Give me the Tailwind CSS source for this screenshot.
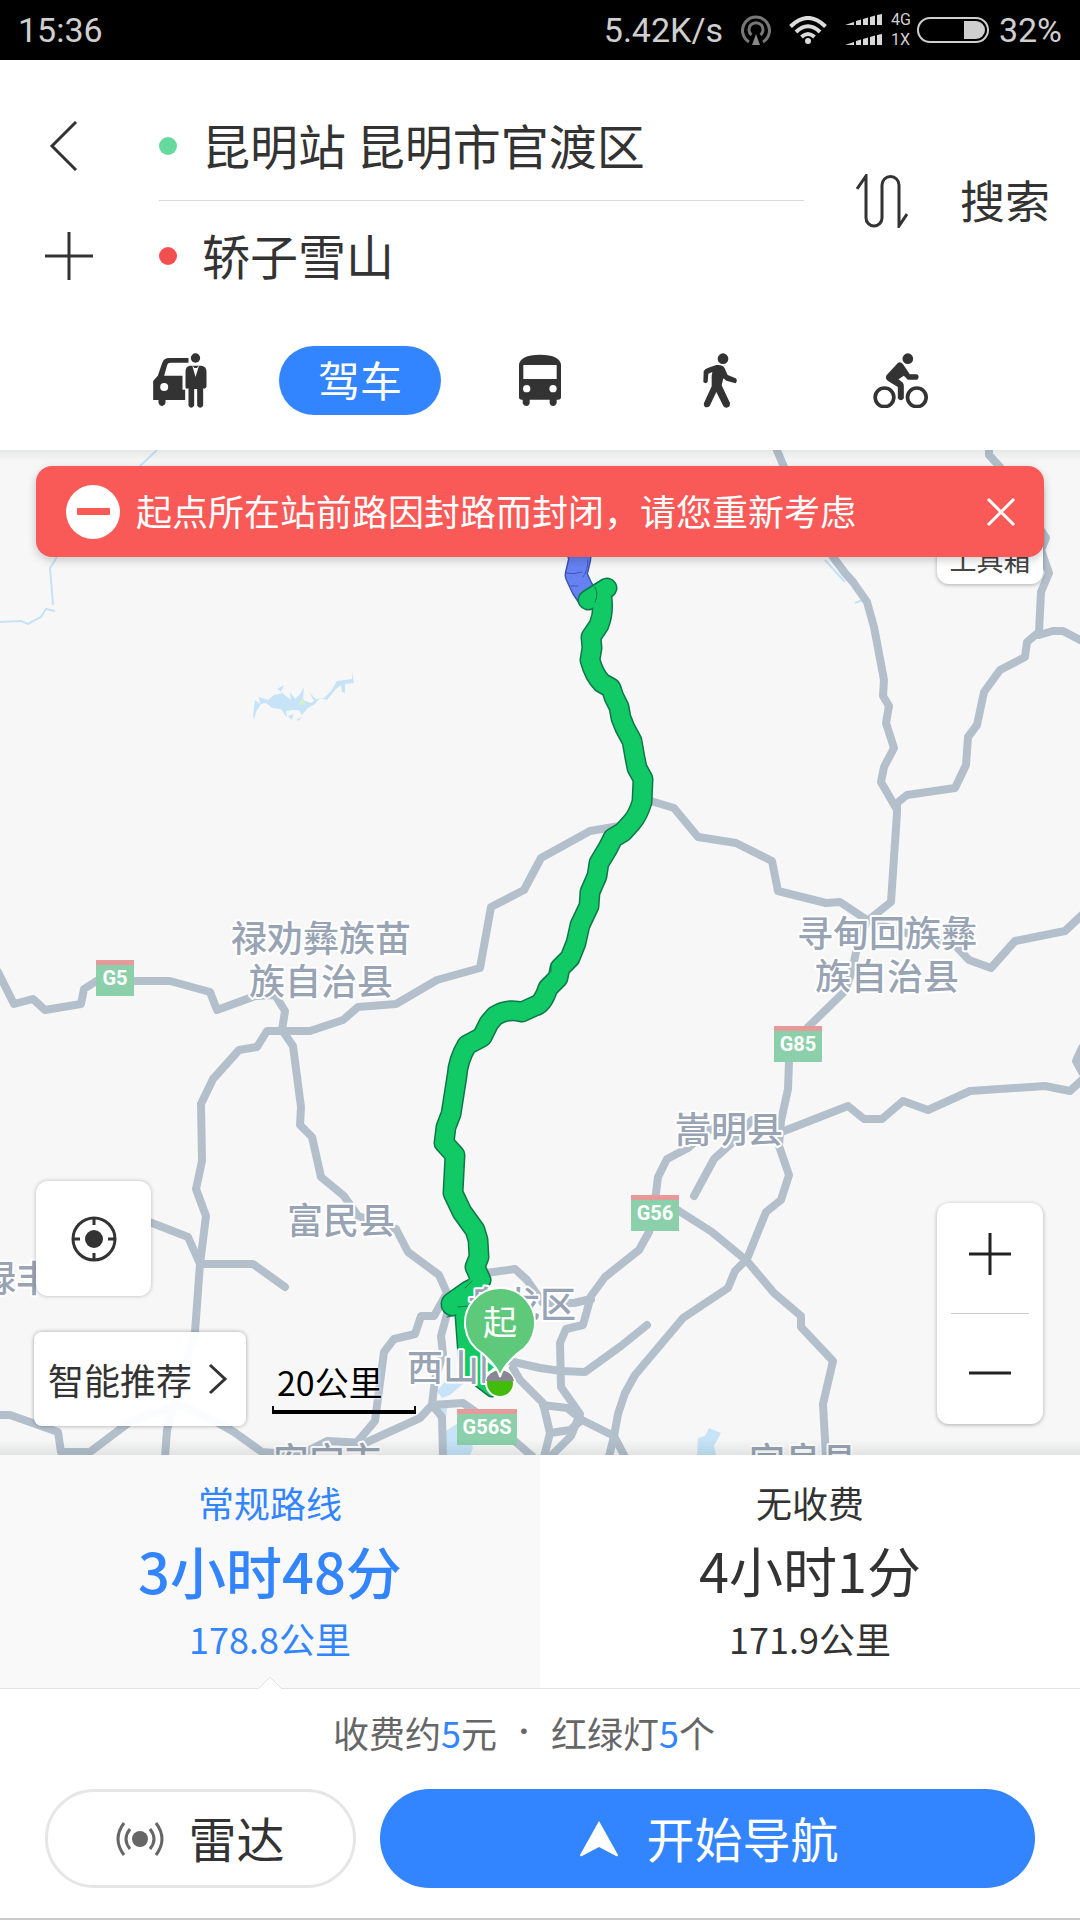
<!DOCTYPE html>
<html lang="zh-CN">
<head>
    <meta charset="UTF-8">
    <meta name="viewport" content="width=device-width, initial-scale=1.0">
    <title>路线规划</title>
    <script src="https://cdn.jsdelivr.net/npm/@tailwindcss/browser@4"></script>
</head>
<body class="min-h-screen flex flex-col bg-white text-[#333] font-['Noto_Sans_CJK_SC',sans-serif]">

    <!-- Status bar -->
    <div class="h-[60px] shrink-0 bg-black text-[#cfcfcf] flex items-center px-[18px] text-[34px] leading-none font-[Roboto,sans-serif]">
        <span class="mr-auto">15:36</span>
        <span>5.42K/s</span>
        <svg class="ml-[18px] w-[30px] h-[30px]" viewBox="0 0 30 30" fill="none" stroke="#777" stroke-width="3">
            <path d="M8 27A13.500 13.500 0 1 1 22 27"/>
            <path d="M10.500 20A7 7 0 1 1 19.500 20"/>
            <path d="M15 19L19 30H11Z" fill="#888" stroke="none"/>
        </svg>
        <svg class="ml-[18px] w-[38px] h-[28px]" viewBox="0 0 38 28" fill="none" stroke="#dcdcdc" stroke-width="4">
            <path d="M1.500 10.500Q19-6.500 36.500 10.500"/>
            <path d="M7 16Q19 4.500 31 16"/>
            <path d="M12.500 21Q19 15 25.500 21"/>
            <circle cx="19" cy="25" r="3" fill="#dcdcdc" stroke="none"/>
        </svg>
        <svg class="ml-[18px] w-[38px] h-[32px]" viewBox="0 0 38 32" fill="#d8d8d8">
            <path d="M0 11L9 8V11ZM11 7L16 5.500V11H11ZM18 5L23 3.500V11H18ZM25 3L30 1.500V11H25ZM32 1L37 0V11H32Z"/>
            <path d="M0 31L9 28V31ZM11 27L16 25.500V31H11ZM18 25L23 23.500V31H18ZM25 23L30 21.500V31H25ZM32 21L37 20V31H32Z"/>
        </svg>
        <span class="ml-2 flex flex-col text-base leading-5"><span>4G</span><span>1X</span></span>
        <span class="ml-[6px] w-[72px] h-[26px] rounded-full border-2 border-[#cfcfcf] p-[2px] flex justify-end">
            <span class="w-[21px] h-full bg-[#cfcfcf] rounded-r-full"></span>
        </span>
        <span class="ml-[10px]">32%</span>
    </div>

    <!-- Start / destination -->
    <header class="shrink-0 bg-white pt-[31px]">
        <div class="flex items-center">
            <div class="w-[159px] shrink-0 pl-[44px]">
                <button class="flex items-center w-[50px] h-[110px]" aria-label="返回">
                    <svg class="w-[50px] h-[50px]" viewBox="0 0 50 50" fill="none" stroke="#333" stroke-width="3"><path d="M32 1L8 25L32 49"/></svg>
                </button>
                <button class="flex items-center w-[50px] h-[110px]" aria-label="添加途经点">
                    <svg class="w-[50px] h-[50px]" viewBox="0 0 50 50" stroke="#333" stroke-width="3"><path d="M25 1V49M1 25H49"/></svg>
                </button>
            </div>
            <div class="flex-1 min-w-0">
                <label class="flex items-center h-[110px] border-b border-[#d9d9d9]">
                    <span class="w-[18px] h-[18px] rounded-full bg-[#66d99c] shrink-0"></span>
                    <input type="text" aria-label="起点" value="昆明站 昆明市官渡区" class="ml-[25px] pb-1 min-w-0 flex-1 text-5xl outline-none">
                </label>
                <label class="flex items-center h-[110px]">
                    <span class="w-[18px] h-[18px] rounded-full bg-[#f25050] shrink-0"></span>
                    <input type="text" aria-label="终点" value="轿子雪山" class="ml-[25px] pb-1 min-w-0 flex-1 text-5xl outline-none">
                </label>
            </div>
            <button class="ml-[52px]" aria-label="交换起终点">
                <svg class="w-[52px] h-[54px]" viewBox="0 0 52 54" fill="none" stroke="#333" stroke-width="3">
                    <path d="M1 15L10 2V44A8 8 0 0 0 26 44V11A8 8 0 0 1 43 11V52L51 40"/>
                </svg>
            </button>
            <button class="ml-[52px] mr-[30px] pb-1 text-[45px] leading-none">搜索</button>
        </div>

        <!-- Travel modes -->
        <nav class="grid grid-cols-5 items-center px-[90px] h-[139px]">
            <button class="flex justify-center" aria-label="打车">
                <svg class="w-[54px] h-[55px]" viewBox="38 40 161 165" fill="#333">
                    <path d="M38 181V124L52 108L65 70Q70 55 86 55H144V69H90Q82 69 80 76L71 108H126V150H134V181Z"/>
                    <path d="M54 180H75V190Q72 199 65 199Q57 199 54 190Z"/>
                    <circle cx="71" cy="142" r="12" fill="#fff"/>
                    <circle cx="165" cy="55" r="14"/>
                    <path d="M148 78H183Q198 80 198 96V142Q193 149 188 146V198Q179 210 170 198V148H161V198Q152 210 144 198V146Q135 149 135 142V96Q135 80 148 78Z"/>
                    <path d="M155 77L165 112L176 77L169 85H162Z" fill="#fff"/>
                </svg>
            </button>
            <button class="justify-self-center w-[162px] h-[69px] pb-1 rounded-full bg-[#3385ff] text-white text-[42px] leading-none">驾车</button>
            <button class="flex justify-center" aria-label="公交">
                <svg class="w-[44px] h-[55px]" viewBox="1135 40 130 165" fill="#333">
                    <path d="M1137 76Q1139 46 1200 45Q1261 46 1263 76V172Q1263 180 1254 180H1250V190Q1247 199 1239 199Q1231 199 1229 190V180H1169V190Q1167 199 1159 199Q1151 199 1148 190V180H1145Q1137 180 1137 172Z"/>
                    <path d="M1150 76H1250V118H1150Z" fill="#fff"/>
                    <circle cx="1160" cy="147" r="11" fill="#fff"/>
                    <circle cx="1239" cy="147" r="11" fill="#fff"/>
                </svg>
            </button>
            <button class="flex justify-center" aria-label="步行">
                <svg class="w-[36px] h-[55px]" viewBox="130 40 106 165" fill="#333">
                    <circle cx="192" cy="57" r="16"/>
                    <path d="M172 76Q190 74 196 84L206 106L230 116Q237 122 230 131L202 123L193 116L188 137L213 190Q214 204 202 204Q196 204 193 199L172 157L152 199Q146 205 138 202Q132 197 135 190L158 140V108L160 97L148 102L146 127Q140 134 133 127L134 95Q138 88 146 85Z"/>
                </svg>
            </button>
            <button class="flex justify-center" aria-label="骑行">
                <svg class="w-[55px] h-[55px]" viewBox="638 40 164 165" fill="#333">
                    <circle cx="742" cy="57" r="16"/>
                    <circle cx="672" cy="173" r="28" fill="none" stroke="#333" stroke-width="11"/>
                    <circle cx="769" cy="173" r="28" fill="none" stroke="#333" stroke-width="11"/>
                    <path d="M712 70Q720 65 727 73L748 104H770Q779 112 770 120H742L730 108L714 119L727 129Q730 132 730 140V176Q721 188 712 176V142L684 125Q672 118 678 107Z"/>
                </svg>
            </button>
        </nav>
    </header>

    <!-- Map -->
    <main class="relative flex-1 min-h-[700px] overflow-hidden bg-[#f7f7f7]">
        <svg class="absolute inset-0 w-full h-full" viewBox="0 450 1080 1005" preserveAspectRatio="xMidYMid slice" role="img" aria-label="昆明站到轿子雪山路线图">
            <!-- water -->
            <g fill="none" stroke="#c6e2f5" stroke-width="2">
                <path d="M157 450L139 467M57 557L50 568L53 605M55 611L46 609L41 617L28 624L21 621L0 622"/>
                <path d="M825 560L845 582M855 603L868 598L860 588"/>
            </g>
            <g fill="#c6e3f8">
                <path d="M253 715L255 700L260 704L259 697L268 700L274 695L283 693L277 689L284 685L281 692L291 700L290 692L295 699L300 694L304 687L303 700L311 703L314 701L309 692L316 699L324 698L331 691L337 681L352 679V672L354 683L345 684V693L342 692L341 685L336 689L327 700L320 698L315 704L308 708L302 715L299 710L292 710L286 711L287 718L281 709L272 708L266 703L261 704L256 712L254 720ZM288 716L293 714L292 720ZM297 719L303 717L298 721Z"/>
                <path d="M697 1455L698 1438L705 1436L709 1428L721 1433L714 1446L716 1455Z"/>
                <path d="M437 1391L446 1380L465 1382L450 1395L442 1398ZM446 1418L448 1402L439 1400L441 1412ZM446 1431L463 1420L473 1448L470 1455H446Z"/>
            </g>
            <path d="M299 702L303 698L306 705H300Z" fill="#d2efd0"/>
            <!-- roads -->
            <g fill="none" stroke="#b3c0cc" stroke-width="8" stroke-linejoin="round" stroke-linecap="round">
                <path d="M776 448L784 467L833 557L845 573L853 582L867 602L874 627L884 680L883 696L889 706L886 723L894 748L884 767L881 782L896 808"/>
                <path d="M989 448V455L1000 467L1046 538L1041 550L1049 573L1041 592L1039 632L1027 642L1025 657L1000 670L984 692L977 725L968 737L966 765L955 788L907 795L897 803V813L891 902L871 918"/>
                <path d="M1039 635L1053 631H1063L1082 641"/>
                <path d="M640 797L654 802L674 808L698 837L736 843L772 861L778 891L826 903L840 902L867 920L902 932L953 943L969 960L991 968L1015 941L1065 931L1082 915"/>
                <path d="M625 825L590 831L541 858L524 890L491 907L480 968L437 980L396 1004L358 1007L343 1020L310 1031H267L257 1047L239 1050L213 1079L201 1104L202 1161L196 1189L206 1216L200 1264L195 1332L167 1430L165 1457"/>
                <path d="M-2 972L14 1004L33 999L45 1010L81 1004L84 989L98 980L134 981H170L210 992L217 1010L255 996L275 995L285 1011L282 1030L293 1046L301 1107L300 1125L312 1137L321 1177L344 1196L358 1216L396 1229L408 1252L439 1275L447 1293L434 1316H421L415 1334L394 1339L384 1352L375 1421L358 1441"/>
                <path d="M447 1293V1314L441 1336L443 1354L435 1379L432 1405L442 1417L443 1457"/>
                <path d="M140 1219L152 1223L188 1237L200 1264H253L285 1287"/>
                <path d="M-2 1415H10L58 1432L61 1452H90L131 1421L180 1405L213 1420L234 1432L262 1452L300 1455L327 1441L365 1443L420 1418L432 1405L463 1403L473 1410L500 1430L517 1443L533 1457"/>
                <path d="M486 1273L515 1269L527 1280L543 1303H574L591 1299"/>
                <path d="M505 1360L540 1368L561 1371L585 1372L621 1346L647 1325"/>
                <path d="M513 1368L520 1380L543 1403L550 1433L544 1457M543 1405L567 1408L582 1420L614 1436L609 1457M550 1433L570 1430L582 1420M614 1436L625 1457"/>
                <path d="M735 1122L709 1130L688 1148L667 1159L658 1177L656 1193L649 1232L639 1250L605 1277L591 1296L583 1325L566 1329L560 1343L561 1387L580 1414L571 1436L550 1457"/>
                <path d="M614 1436L618 1414L625 1393L635 1375L683 1318L728 1288L735 1271L747 1259L766 1212L781 1200L789 1175L779 1146L781 1121L788 1089L789 1061L800 1035L845 991L852 971L858 943L867 920"/>
                <path d="M779 1133L848 1106L864 1119H882L903 1101L928 1110L970 1091L1045 1086L1070 1091L1082 1080M1082 1048L1076 1061L1082 1072"/>
                <path d="M656 1198L679 1211L712 1232L747 1261L774 1293L801 1316V1327L833 1361L823 1404L826 1457"/>
                <path d="M694 1196L714 1159L735 1140L752 1120L779 1133"/>
            </g>

            <!-- route -->
            <g fill="none" stroke-linejoin="round" stroke-linecap="round">
                <path d="M575 545L580 558L576 575L582 588L588 597" stroke="#3d56b5" stroke-width="23"/>
                <path d="M575 545L580 558L576 575L582 588L588 597" stroke="#6682f2" stroke-width="20"/>
                <path d="M566 573Q574 575 582 572M571 586L578 586M588 560Q588 570 583 577" stroke="#3d56b5"/>
                <path d="M588 600L607 588M602 598Q604 612 599 625L591 637L592 648L590 660Q594 675 602 683L611 688L614 697L619 707L621 718L625 728L632 741L635 758L637 768L643 779L642 802Q638 815 632 822L623 832L613 838L608 848L599 863L597 876L590 892L589 906L580 925L576 943L570 958L560 968L558 978L548 988Q543 1004 535 1006L522 1012Q507 1008 495 1016L489 1023L482 1037L467 1045Q458 1060 457 1076L451 1114L446 1127L444 1143L455 1155L453 1193L462 1212L475 1230L478 1240L479 1257L475 1267L481 1280L470 1292" stroke="#10774a" stroke-width="21"/>
                <path d="M462 1316L466 1370L492 1390L497 1375L476 1310Z" fill="#10774a" stroke="#10774a" stroke-width="15"/>
                <path d="M470 1292L453 1304" stroke="#10774a" stroke-width="25"/>
                <path d="M470 1292L453 1304" stroke="#11c965" stroke-width="22"/>
                <path d="M588 600L607 588M602 598Q604 612 599 625L591 637L592 648L590 660Q594 675 602 683L611 688L614 697L619 707L621 718L625 728L632 741L635 758L637 768L643 779L642 802Q638 815 632 822L623 832L613 838L608 848L599 863L597 876L590 892L589 906L580 925L576 943L570 958L560 968L558 978L548 988Q543 1004 535 1006L522 1012Q507 1008 495 1016L489 1023L482 1037L467 1045Q458 1060 457 1076L451 1114L446 1127L444 1143L455 1155L453 1193L462 1212L475 1230L478 1240L479 1257L475 1267L481 1280L470 1292" stroke="#11c965" stroke-width="18"/>
                <path d="M462 1316L466 1370L492 1390L497 1375L476 1310Z" fill="#11c965" stroke="#11c965" stroke-width="12"/>
                <path d="M595 587Q599 594 595 602M458 1307L468 1306M551 972V965M465 1288L472 1281M447 1317L456 1315" stroke="#10774a"/>
            </g>

            <!-- place names -->
            <g class="font-['Noto_Sans_CJK_SC',sans-serif] font-medium" font-size="36" fill="#98a3b3" stroke="#fff" stroke-width="4" paint-order="stroke" stroke-linejoin="round" text-anchor="middle">
                <text x="321" y="952">禄劝彝族苗</text>
                <text x="321" y="995">族自治县</text>
                <text x="887" y="947">寻甸回族彝</text>
                <text x="887" y="990">族自治县</text>
                <text x="729" y="1143">嵩明县</text>
                <text x="341" y="1234">富民县</text>
                <text x="16" y="1292">禄丰</text>
                <text x="522" y="1318">盘龙区</text>
                <text x="461" y="1381">西山区</text>
                <text x="327" y="1474">安宁市</text>
                <text x="803" y="1474">宜良县</text>
            </g>

            <!-- highway shields -->
            <g class="font-[Roboto,sans-serif] font-bold" font-size="20" text-anchor="middle">
                <path d="M96 960H134V996H96ZM774 1026H822V1062H774ZM631 1195H679V1231H631ZM457 1409H517V1445H457Z" fill="#8bd0aa"/>
                <path d="M96 960H134V965H96ZM774 1026H822V1031H774ZM631 1195H679V1200H631ZM457 1409H517V1414H457Z" fill="#e69a9a"/>
                <g fill="#fff">
                    <text x="115" y="985">G5</text>
                    <text x="798" y="1051">G85</text>
                    <text x="655" y="1220">G56</text>
                    <text x="487" y="1434">G56S</text>
                </g>
            </g>

            <!-- start marker -->
            <circle cx="500" cy="1383" r="14" fill="#42bb0b" stroke="#fff" stroke-width="2"/>
            <path d="M486 1381Q488 1371 500 1371Q512 1371 514 1381Z" fill="#8a8795"/>
            <path d="M500 1377Q498 1367 482 1353A35 35 0 1 1 518 1353Q502 1367 500 1377Z" fill="#5fc97b" stroke="#fff" stroke-width="2"/>
            <text class="font-['Noto_Sans_CJK_SC',sans-serif]" x="500" y="1335" font-size="34" fill="#fff" text-anchor="middle">起</text>
        </svg>

        <!-- soft edges under the header and above the sheet -->
        <div class="absolute inset-x-0 top-0 h-3 bg-linear-to-b from-[#233]/8 to-transparent"></div>
        <div class="absolute inset-x-0 bottom-0 h-4 bg-linear-to-t from-[#233]/10 to-transparent"></div>

        <button class="absolute right-[37px] top-[30px] w-[106px] h-[104px] rounded-xl bg-white shadow-[0_1px_4px_rgba(0,0,0,0.3)] flex items-end justify-center pb-[8px] text-[27px] leading-[32px] text-[#444]">工具箱</button>

        <div role="alert" class="absolute inset-x-9 top-4 h-[91px] rounded-2xl bg-[#fa5a57] text-white shadow-[0_3px_10px_rgba(0,0,0,0.2)] flex items-center pl-[30px] pr-[28px]">
            <svg class="w-[54px] h-[54px] shrink-0" viewBox="0 0 54 54"><circle cx="27" cy="27" r="27" fill="#fff"/><rect x="11" y="23" width="33" height="7" rx="1" fill="#fa5a57"/></svg>
            <p class="ml-4 mr-auto pb-[3px] text-4xl leading-none whitespace-nowrap">起点所在站前路因封路而封闭，请您重新考虑</p>
            <button aria-label="关闭">
                <svg class="w-[30px] h-[30px]" viewBox="0 0 30 30" stroke="#fff" stroke-width="3"><path d="M2 2L28 28M28 2L2 28"/></svg>
            </button>
        </div>

        <button class="absolute left-9 bottom-[159px] w-[115px] h-[115px] rounded-xl bg-white shadow-[0_0_4px_rgba(0,0,0,0.25)] flex items-center justify-center" aria-label="定位">
            <svg class="w-[46px] h-[46px]" viewBox="0 0 46 46" fill="none" stroke="#333" stroke-width="3">
                <circle cx="23" cy="23" r="21"/><circle cx="23" cy="23" r="9" fill="#333" stroke="none"/>
                <path d="M23 2V9M23 37V44M2 23H9M37 23H44"/>
            </svg>
        </button>

        <button class="absolute left-[34px] bottom-[29px] w-[212px] h-[94px] rounded-lg bg-white/95 shadow-[0_0_4px_rgba(0,0,0,0.35)] flex items-center justify-between pl-[14px] pr-[18px] text-4xl leading-none">
            智能推荐
            <svg class="w-[20px] h-[32px]" viewBox="0 0 20 32" fill="none" stroke="#333" stroke-width="3"><path d="M2 2L17 16L2 30"/></svg>
        </button>

        <div class="absolute left-[272px] bottom-[41px] w-[144px] text-black">
            <p class="pl-[5px] text-[34px] leading-[48px] [text-shadow:0_0_3px_white,0_0_3px_white]">20公里</p>
            <div class="h-[8px] border-x-2 border-b-4 border-black"></div>
        </div>

        <div class="absolute right-[37px] bottom-[31px] w-[106px] h-[221px] rounded-xl bg-white shadow-[0_1px_4px_rgba(0,0,0,0.3)] flex flex-col px-[14px]">
            <button class="flex-1 flex items-center justify-center border-b border-[#ccc] pb-2" aria-label="放大">
                <svg class="w-[42px] h-[42px]" viewBox="0 0 42 42" stroke="#222" stroke-width="3"><path d="M21 0V42M0 21H42"/></svg>
            </button>
            <button class="flex-1 flex items-center justify-center pt-2" aria-label="缩小">
                <svg class="w-[42px] h-[42px]" viewBox="0 0 42 42" stroke="#222" stroke-width="3"><path d="M0 21H42"/></svg>
            </button>
        </div>
    </main>

    <!-- Route options -->
    <section class="shrink-0 bg-white border-b-2 border-[#ccc]">
        <div class="grid grid-cols-2 h-[234px] border-b border-[#e2e2e2] text-4xl">
            <button class="relative bg-[#f9f9f9] text-[#3385ff] flex flex-col items-center pt-[21px]">
                <span class="leading-[52px]">常规路线</span>
                <span class="text-[56px] leading-[84px] font-medium">3小时48分</span>
                <span class="leading-[52px]">178.8公里</span>
                <svg class="absolute left-1/2 -translate-x-1/2 -bottom-px w-[24px] h-[13px]" viewBox="0 0 24 13" fill="#fff" stroke="#e2e2e2"><path d="M0 13L12 1L24 13"/></svg>
            </button>
            <button class="flex flex-col items-center pt-[21px]">
                <span class="leading-[52px]">无收费</span>
                <span class="text-[54px] leading-[84px]">4小时1分</span>
                <span class="leading-[52px]">171.9公里</span>
            </button>
        </div>
        <p class="h-[90px] flex items-center justify-center pr-8 pb-1 text-4xl leading-none text-[#666]">
            <span>收费约<span class="text-[#3385ff]">5</span>元</span>
            <span class="w-[54px] text-center font-[Roboto,sans-serif] font-bold">·</span>
            <span>红绿灯<span class="text-[#3385ff]">5</span>个</span>
        </p>
        <div class="flex gap-6 px-[45px] pt-[10px] pb-[30px] text-5xl leading-none">
            <button class="w-[311px] h-[99px] rounded-full border-3 border-[#e6e6e6] flex items-center justify-center gap-6">
                <svg class="w-[48px] h-[34px]" viewBox="0 0 48 34" fill="none" stroke="#666" stroke-width="3">
                    <circle cx="24" cy="17" r="8" fill="#666" stroke="none"/>
                    <path d="M14 7Q6 17 14 27M34 7Q42 17 34 27M8 1Q-4 17 8 33M40 1Q52 17 40 33"/>
                </svg>
                <span class="pb-1">雷达</span>
            </button>
            <button class="flex-1 h-[99px] rounded-full bg-[#3385ff] text-white flex items-center justify-center gap-7 pl-1">
                <svg class="w-[38px] h-[36px]" viewBox="0 0 38 36" fill="#fff"><path d="M19 0L38 34Q38 36 36 35L19 26L2 35Q0 36 0 34Z"/></svg>
                <span class="pb-1">开始导航</span>
            </button>
        </div>
    </section>
</body>
</html>
